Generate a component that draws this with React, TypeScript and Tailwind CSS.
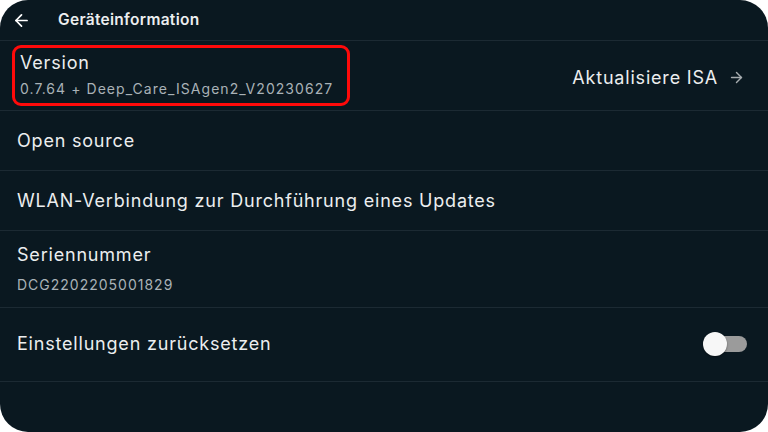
import { ArrowLeft, ArrowRight } from 'lucide-react'

// Static settings screen: "Geräteinformation"
function Divider() {
  return <div className="h-px bg-[#1c2a33]" />
}

export default function App() {
  return (
    <div className="w-[768px] h-[432px] bg-white">
      <div
        className="w-full h-full rounded-[28px] bg-[#0a1820] text-[#eceeef] overflow-hidden flex flex-col"
        style={{ fontFamily: 'Inter, "Noto Sans", sans-serif' }}
      >
        {/* Header */}
        <div className="h-[40px] flex items-center shrink-0">
          <ArrowLeft size={19} strokeWidth={2.2} className="ml-[12px] text-white" />
          <span className="ml-[27px] text-[15.5px] font-semibold tracking-[0.3px]">Geräteinformation</span>
        </div>
        <Divider />

        {/* Version */}
        <div className="h-[69px] flex items-center justify-between pr-[23px]">
          <div className="ml-[12px] w-[338px] h-[61px] border-[3px] border-[#ff0a0a] rounded-[9px] flex flex-col justify-center pl-[5px]">
            <span className="text-[18px] leading-[22px] tracking-[0.8px] -mt-[2px]">Version</span>
            <span className="text-[14px] leading-[18px] mt-[6px] text-[#a9b2b7] tracking-[1.05px]">
              0.7.64 + Deep_Care_ISAgen2_V20230627
            </span>
          </div>
          <div className="flex items-center gap-[10px] mt-[4px]">
            <span className="text-[18px] tracking-[0.8px]">Aktualisiere ISA</span>
            <ArrowRight size={17} strokeWidth={2} className="text-[#a7acaf]" />
          </div>
        </div>
        <Divider />

        {/* Open source */}
        <div className="h-[59px] flex items-center px-[17px]">
          <span className="text-[18px] tracking-[0.8px]">Open source</span>
        </div>
        <Divider />

        {/* WLAN */}
        <div className="h-[59px] flex items-center px-[17px]">
          <span className="text-[18px] tracking-[0.8px]">WLAN-Verbindung zur Durchführung eines Updates</span>
        </div>
        <Divider />

        {/* Seriennummer */}
        <div className="h-[76px] flex flex-col justify-center px-[17px]">
          <span className="text-[18px] leading-[22px] tracking-[0.8px]">Seriennummer</span>
          <span className="text-[14px] leading-[18px] mt-[10px] text-[#a9b2b7] tracking-[1px]">DCG2202205001829</span>
        </div>
        <Divider />

        {/* Einstellungen zurücksetzen */}
        <div className="h-[73px] flex items-center justify-between pl-[17px] pr-[21px]">
          <span className="text-[18px] tracking-[0.8px] -mt-[2px]">Einstellungen zurücksetzen</span>
          <div className="relative w-[44px] h-[24px] flex items-center -mt-[1px]">
            <div className="ml-[10px] w-[34px] h-[16px] rounded-full bg-[#9b9b9b]" />
            <div className="absolute left-0 top-0 w-[24px] h-[24px] rounded-full bg-[#f7f7f7] shadow-[0_1px_2px_rgba(0,0,0,0.4)]" />
          </div>
        </div>
        <Divider />
      </div>
    </div>
  )
}
